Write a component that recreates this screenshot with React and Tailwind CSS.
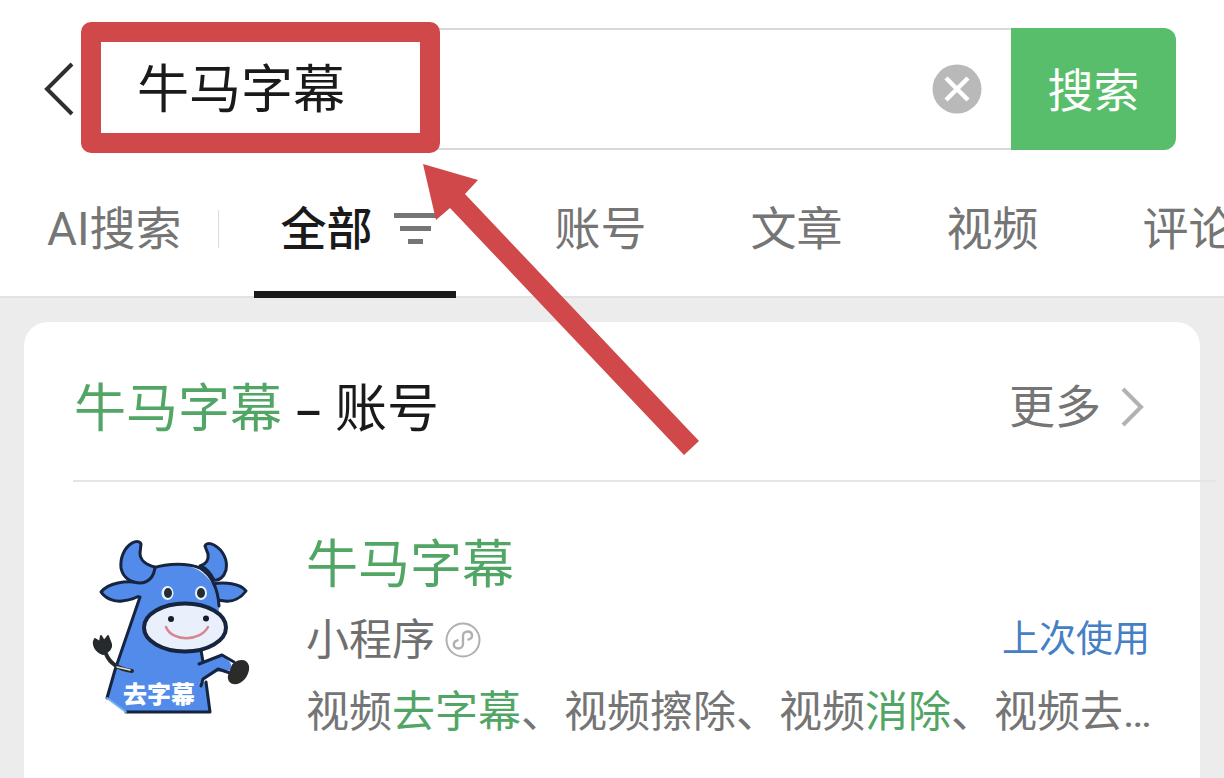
import React, { useState } from "react";

const tabs = ["账号", "文章", "视频", "评论"];

const description = [
    { text: "视频" },
    { text: "去字幕", match: true },
    { text: "、视频擦除、视频" },
    { text: "消除", match: true },
    { text: "、视频去…" },
];

const BackIcon = () => (
    <svg width="30" height="54" viewBox="0 0 30 54" fill="none" aria-hidden="true">
        <path d="M28 2 L3 27 L28 52" stroke="#2e2f31" strokeWidth="4" />
    </svg>
);

const ClearIcon = () => (
    <svg width="50" height="50" viewBox="0 0 50 50" fill="none" aria-hidden="true">
        <circle cx="25" cy="25" r="24.5" fill="#b9b9b9" />
        <path d="M14 14 L36 36 M36 14 L14 36" stroke="#fff" strokeWidth="4.5" />
    </svg>
);

const FilterIcon = () => (
    <svg width="44" height="32" viewBox="0 0 44 32" fill="#757575" aria-hidden="true">
        <rect x="0" y="0" width="44" height="5" />
        <rect x="6" y="13" width="31" height="5" />
        <rect x="14" y="26" width="15" height="5" />
    </svg>
);

const MoreIcon = () => (
    <svg width="24" height="40" viewBox="0 0 24 40" fill="none" aria-hidden="true">
        <path d="M2 2 L20 20 L2 38" stroke="#b2b2b2" strokeWidth="4" />
    </svg>
);

const MiniProgramIcon = () => (
    <svg width="36" height="36" viewBox="0 0 36 36" fill="none" stroke="#b0b0b0" aria-hidden="true">
        <circle cx="18" cy="18" r="16.5" strokeWidth="2" />
        <path
            d="M23.5 17.5 C26 17 27.3 15.3 27 13 C26.7 10.6 24.8 9.5 22.7 9.5 C20 9.5 18 11.3 18 13.8 V22 C18 24.5 16 26.5 13.3 26.5 C10.7 26.5 8.8 24.9 8.8 22.6 C8.8 20.3 10.2 18.8 12.5 18.3"
            strokeWidth="2.4"
            strokeLinecap="round"
        />
    </svg>
);

// Blue bull used as the mini program logo
const BullLogo = () => (
    <svg
        className="shrink-0"
        width="180"
        height="200"
        viewBox="0 0 180 200"
        role="img"
        aria-label="牛马字幕"
        stroke="#16243f"
        strokeWidth="3"
        strokeLinejoin="round"
        strokeLinecap="round"
    >
        {/* ears */}
        <path
            d="M60 53 C46 50 28 53 21 62 C25 68 33 72 42 71 C50 70 56 68 61 65 Z M132 54 C145 52 160 53 166 61 C161 68 153 72 145 71 L137 70 Z"
            fill="#528be9"
        />
        {/* body and head */}
        <path
            d="M60 67 L35 140 L27 168 L46 182 H130 L126 152 L119 153 L137 142 L153 140 L150 132 L142 125 L124 132 L120 116 L138 104 L139 74 C137 58 129 47 120 41 C108 33 84 33 73 39 C58 43 52 54 56 62 Z"
            fill="#528be9"
            stroke="none"
        />
        <path
            d="M60 67 L35 140 L27 168 M46 182 H130 L126 152 M121 156 L123 149 L138 139 L150 143 M154 132 L142 125 L119 134 M123 132 L121 120 M73 38 C88 33 108 33 120 38 C131 45 138 58 139 76"
            fill="none"
        />
        <path d="M27 168 L46 182" stroke="#6fb2ee" strokeWidth="2" />
        {/* horns */}
        <path
            d="M61 14 C60 11 56 11 52 13 C44 18 40 28 41 38 C43 48 51 53 61 53 C69 52 74 46 75 37 C66 35 60 30 60 23 Z M125 16 C126 13 130 13 134 15 C143 20 148 30 146 40 C144 47 139 51 134 50 C131 44 126 38 120 36 C126 34 129 30 128 24 Z"
            fill="#528be9"
        />
        {/* face */}
        <g stroke="none">
            <ellipse cx="87.5" cy="63" rx="6" ry="7" fill="#e7f2ff" />
            <ellipse cx="121" cy="63" rx="6" ry="7" fill="#e7f2ff" />
            <ellipse cx="88" cy="63" rx="4" ry="5" fill="#252c32" />
            <ellipse cx="121" cy="63" rx="4" ry="5" fill="#252c32" />
        </g>
        <ellipse cx="105" cy="97.5" rx="41" ry="24" fill="#e9effb" strokeWidth="4" />
        <circle cx="91" cy="89" r="3" fill="#171d27" stroke="none" />
        <circle cx="126" cy="88.5" r="3" fill="#171d27" stroke="none" />
        <path d="M86 97 C92 112 120 112 128 97" fill="none" stroke="#d7868f" strokeWidth="2.5" />
        {/* tail and hoof */}
        <path d="M26 124 C30 134 38 139 52 141" fill="none" stroke="#272a2c" strokeWidth="4" />
        <path d="M37 137 L50 140" stroke="#dfe4d6" strokeWidth="1.5" />
        <path
            d="M15 109 C12 114 15 121 23 124 C29 122 32 118 31 114 L28 106 L24 111 L21 106 L20 112 Z"
            fill="#272a2c"
            stroke="#272a2c"
            strokeWidth="2"
        />
        <path
            d="M153 135 C158 130 166 129 168 136 C169 143 164 151 157 153 C150 154 147 149 150 143 Z"
            fill="#2b2c2a"
            stroke="#2b2c2a"
            strokeWidth="2"
        />
        <text
            className="font-['Noto_Sans_CJK_SC',sans-serif] text-[24px] font-black"
            x="43"
            y="173"
            fill="#fff"
            stroke="none"
        >
            去字幕
        </text>
    </svg>
);

const SearchBar = () => {
    const [query, setQuery] = useState("牛马字幕");

    return (
        <form
            className="flex items-center pt-7 pr-12 pl-11"
            onSubmit={(e) => e.preventDefault()}
        >
            <button type="button" aria-label="返回" className="w-[43px] shrink-0">
                <BackIcon />
            </button>
            <div className="relative flex h-[122px] min-w-0 flex-1 items-center border-y-2 border-[#d8d8d8] pr-[29px] pl-[50px]">
                <input
                    aria-label="搜索"
                    className="min-w-0 flex-1 pt-1 text-[52px] text-[#1a1a1a] outline-none"
                    value={query}
                    onChange={(e) => setQuery(e.target.value)}
                />
                <button type="button" aria-label="清除" onClick={() => setQuery("")}>
                    <ClearIcon />
                </button>
                {/* highlight round the query */}
                <div className="pointer-events-none absolute -top-2 -left-1.5 h-[131px] w-[359px] rounded-[10px] border-[20px] border-[#d0484a]" />
            </div>
            <button
                type="submit"
                className="h-[122px] w-[165px] shrink-0 rounded-r-xl bg-[#59be6b] pt-1 text-[46px] text-white"
            >
                搜索
            </button>
        </form>
    );
};

const TabBar = () => (
    <nav className="flex h-[148px] overflow-hidden bg-[linear-gradient(#e2e2e2,#e2e2e2)] bg-[length:100%_2px] bg-bottom bg-no-repeat pl-[47px] text-[46px] whitespace-nowrap text-[#757575]">
        <a href="#ai" className="flex items-center pt-2.5">
            AI搜索
        </a>
        <div className="mt-[60px] ml-9 h-[38px] w-px shrink-0 bg-[#dcdcdc]" />
        <a
            href="#all"
            className="ml-[35px] flex w-[202px] shrink-0 items-center gap-[21px] border-b-[7px] border-[#1a1a1a] pt-[17px] pl-[27px] font-medium text-[#1a1a1a]"
        >
            全部
            <FilterIcon />
        </a>
        <div className="ml-[99px] flex gap-[104px]">
            {tabs.map((tab) => (
                <a key={tab} href={`#${tab}`} className="flex items-center pt-2.5">
                    {tab}
                </a>
            ))}
        </div>
    </nav>
);

const ResultCard = () => (
    <section className="mx-6 mt-6 flex-1 rounded-t-3xl bg-white">
        <div className="flex h-[158px] items-center justify-between pt-3 pr-[55px] pl-[50px]">
            <h2 className="font-['Noto_Sans','Noto_Sans_CJK_SC',sans-serif] text-[52px] text-[#1a1a1a]">
                <span className="text-[#51a665]">牛马字幕</span> – 账号
            </h2>
            <a href="#more" className="flex items-center gap-5 text-[46px] text-[#757575]">
                更多
                <MoreIcon />
            </a>
        </div>
        <div className="-mr-4 ml-[49px] h-0.5 bg-[#e5e5e5]" />
        <div className="flex pt-12 pr-[50px] pl-14">
            <BullLogo />
            <div className="ml-[46px] min-w-0 flex-1">
                <h3 className="text-[52px] leading-[72px] text-[#51a665]">牛马字幕</h3>
                <div className="flex h-[76px] items-center justify-between">
                    <p className="flex items-center gap-2.5 text-[43px] text-[#6f6f6f]">
                        小程序
                        <MiniProgramIcon />
                    </p>
                    <a href="#last" className="text-[37px] text-[#4580c6]">
                        上次使用
                    </a>
                </div>
                <p className="text-[43px] leading-[68px] whitespace-nowrap text-[#757575]">
                    {description.map((part) => (
                        <span key={part.text} className={part.match ? "text-[#51a665]" : ""}>
                            {part.text}
                        </span>
                    ))}
                </p>
            </div>
        </div>
    </section>
);

const App = () => (
    <main className="relative flex min-h-screen flex-col overflow-hidden bg-[#ececec] font-[Roboto,'Noto_Sans_CJK_SC',sans-serif]">
        <header className="bg-white">
            <SearchBar />
            <TabBar />
        </header>
        <ResultCard />
        {/* arrow pointing at the search box */}
        <svg
            className="pointer-events-none absolute top-[164px] left-[423px]"
            width="276"
            height="291"
            viewBox="0 0 276 291"
            aria-hidden="true"
        >
            <path d="M0 0 L55 16 L42 30 L276 277 L261 291 L27 44 L13 56 Z" fill="#d0484a" />
        </svg>
    </main>
);

export default App;
